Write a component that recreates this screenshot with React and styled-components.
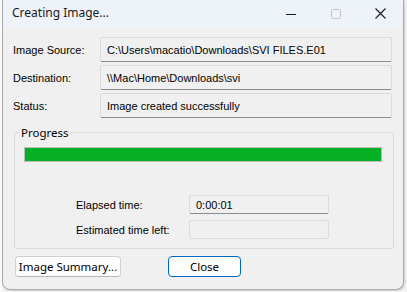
import React from 'react';
import styled, { createGlobalStyle } from 'styled-components';

const GlobalStyle = createGlobalStyle`
  html, body {
    margin: 0;
    padding: 0;
    background: #f3f3f3;
  }
`;

const Desktop = styled.div`
  width: 407px;
  height: 292px;
  padding: 0 3px 2px 2px;
  box-sizing: border-box;
  background: linear-gradient(to right, #fbfbfb 0 2px, #f3f3f3 2px);
`;

const Window = styled.div`
  width: 402px;
  height: 290px;
  box-sizing: border-box;
  border: 1px solid #a9a9a9;
  border-top: none;
  border-radius: 0 0 8px 8px;
  background: #f0f0f0;
  display: flex;
  flex-direction: column;
  overflow: hidden;
  box-shadow: 1px 1px 2px rgba(0, 0, 0, 0.15);
`;

const TitleBar = styled.div`
  height: 27px;
  flex: none;
  display: flex;
  align-items: center;
  background: #eef2f9;
  padding-left: 9px;
`;

const Title = styled.div`
  flex: 1;
  font-family: 'Noto Sans', 'Open Sans', sans-serif;
  font-size: 12px;
  color: #1a1a1a;
  margin-top: -2px;
`;

const Control = styled.div`
  width: 45px;
  height: 27px;
  display: flex;
  align-items: center;
  justify-content: center;
  color: ${({ disabled }) => (disabled ? '#c4c4c4' : '#1a1a1a')};
`;

const Content = styled.div`
  flex: 1;
  display: flex;
  flex-direction: column;
  padding: 10px 11px 0 10px;
  font-family: 'Liberation Sans', Arial, sans-serif;
  font-size: 11px;
  color: #000;
`;

const InfoRows = styled.div`
  display: flex;
  flex-direction: column;
  gap: 3px;
`;

const InfoRow = styled.div`
  display: grid;
  grid-template-columns: 87px 1fr;
  align-items: center;
`;

const Field = styled.div`
  height: ${({ h }) => h || 25}px;
  box-sizing: border-box;
  display: flex;
  align-items: center;
  padding-left: 6px;
  background: #f0f0f0;
  border: 1px solid #dadada;
  border-bottom: 1px solid ${({ underline }) => (underline ? '#8c8c8c' : '#dadada')};
  border-radius: 2px;
  white-space: nowrap;
`;

const Group = styled.fieldset`
  margin: 7px -2px 0 1px;
  padding: 6px 11px 6px 9px;
  height: 124px;
  box-sizing: border-box;
  border: 1px solid #dadada;
  border-radius: 2px;
  display: flex;
  flex-direction: column;
`;

const Legend = styled.legend`
  padding: 0 2px;
  margin-left: -5px;
  font-family: 'Noto Sans', 'Open Sans', sans-serif;
  font-size: 11.5px;
  color: #000;
`;

const Bar = styled.div`
  height: 15px;
  box-sizing: border-box;
  border: 1px solid #bcbcbc;
  background: #e6e6e6;
  margin-top: 1px;
`;

const BarFill = styled.div`
  height: 100%;
  background: #06b025;
`;

const TimeRows = styled.div`
  margin-top: 33px;
  display: flex;
  flex-direction: column;
  gap: 6px;
  padding-left: 52px;
`;

const TimeRow = styled.div`
  display: grid;
  grid-template-columns: 113px 140px;
  align-items: center;
`;

const Buttons = styled.div`
  display: flex;
  gap: 47px;
  margin-top: 7px;
  padding-left: 2px;
`;

const Button = styled.button`
  width: ${({ w }) => w}px;
  height: 21px;
  padding: 0;
  box-sizing: border-box;
  font-family: 'Noto Sans', 'Open Sans', sans-serif;
  font-size: 11.5px;
  color: #000;
  background: #fdfdfd;
  border: 1px solid ${({ primary }) => (primary ? '#0067c0' : '#d0d0d0')};
  border-bottom-color: ${({ primary }) => (primary ? '#0067c0' : '#b8b8b8')};
  border-radius: 4px;
`;

export default function App() {
  return (
    <>
      <GlobalStyle />
      <Desktop>
        <Window>
          <TitleBar>
            <Title>Creating Image...</Title>
            <Control>
              <svg width="10" height="10" viewBox="0 0 10 10">
                <path d="M0 5.5h10" stroke="currentColor" strokeWidth="1" />
              </svg>
            </Control>
            <Control disabled>
              <svg width="10" height="10" viewBox="0 0 10 10">
                <rect x="0.5" y="0.5" width="9" height="9" rx="1" fill="none" stroke="currentColor" />
              </svg>
            </Control>
            <Control>
              <svg width="11" height="11" viewBox="0 0 11 11">
                <path d="M0.5 0.5l10 10M10.5 0.5l-10 10" stroke="currentColor" strokeWidth="1.1" />
              </svg>
            </Control>
          </TitleBar>
          <Content>
            <InfoRows>
              <InfoRow>
                <span>Image Source:</span>
                <Field underline>C:\Users\macatio\Downloads\SVI FILES.E01</Field>
              </InfoRow>
              <InfoRow>
                <span>Destination:</span>
                <Field underline>\\Mac\Home\Downloads\svi</Field>
              </InfoRow>
              <InfoRow>
                <span>Status:</span>
                <Field underline>Image created successfully</Field>
              </InfoRow>
            </InfoRows>
            <Group>
              <Legend>Progress</Legend>
              <Bar>
                <BarFill style={{ width: '100%' }} />
              </Bar>
              <TimeRows>
                <TimeRow>
                  <span>Elapsed time:</span>
                  <Field h={19} underline>0:00:01</Field>
                </TimeRow>
                <TimeRow>
                  <span>Estimated time left:</span>
                  <Field h={19} />
                </TimeRow>
              </TimeRows>
            </Group>
            <Buttons>
              <Button w={106}>Image Summary...</Button>
              <Button w={73} primary>Close</Button>
            </Buttons>
          </Content>
        </Window>
      </Desktop>
    </>
  );
}
